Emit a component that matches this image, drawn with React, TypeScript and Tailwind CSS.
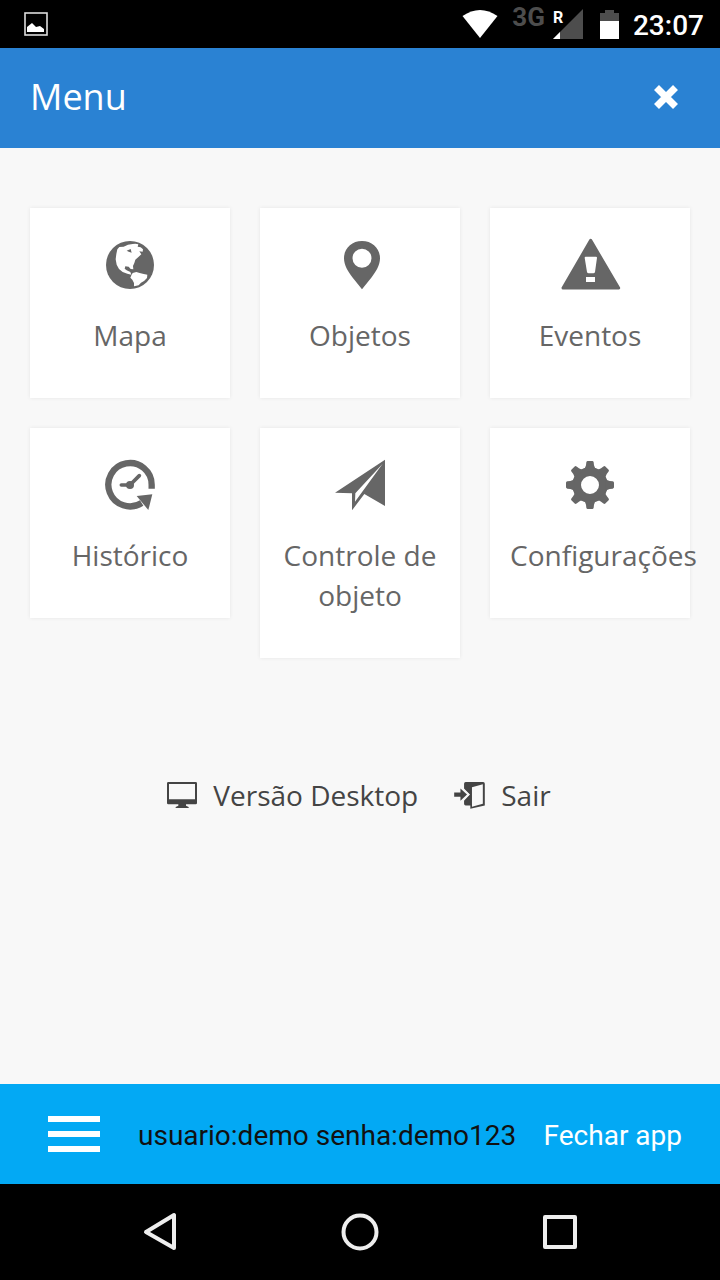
import type { ReactNode } from "react";

const GlobeIcon = () => (
  <>
    <circle cx="120" cy="120" r="72" fill="currentColor" />
    <path
      fill="#fff"
      d="M82 73 88 66 101 65 114 59 128 57 136 56 145 58 143 65 152 67 159 73 158 80 148 79 154 88 146 95 136 104 133 114 129 123 130 133 122 132 116 125 106 124 104 131 110 136 121 141 124 149 112 146 98 141 87 132 80 119 77 103 79 87Z"
    />
    <path fill="currentColor" d="m110 77 12-5 3 11-9-3Z" />
    <path
      fill="#fff"
      d="M124 151 128 144 139 141 149 144 158 146 172 149 171 159 162 168 153 173 146 181 132 184 132 174 127 164 121 158Z"
    />
  </>
);

const PinIcon = () => (
  <path
    fill="currentColor"
    fillRule="evenodd"
    d="M126 48c-31 0-54 22-54 52 0 21 12 39 25 57l29 36 29-36c13-18 25-36 25-57 0-30-23-52-54-52Zm0 23a28.500 28.500 0 1 1 0 57 28.500 28.500 0 0 1 0-57Z"
  />
);

const WarningIcon = () => (
  <>
    <path
      d="M122 46 206 189H39Z"
      fill="currentColor"
      stroke="currentColor"
      strokeWidth="9"
      strokeLinejoin="round"
    />
    <path fill="#fff" d="M104 98q0-3 3-3h31q3 0 3 3l-6 43q-1 4-5 4h-14q-4 0-5-4ZM108 156h27v15h-27Z" />
  </>
);

const HistoryIcon = () => (
  <>
    <path
      d="M185 131v-11a65 65 0 1 0-30 54"
      fill="none"
      stroke="currentColor"
      strokeWidth="19"
    />
    <path fill="currentColor" d="m140 153 47-5-12 47Z" />
    <path d="M94 120h22M123 117l25-25" fill="none" stroke="currentColor" strokeWidth="11" strokeLinecap="round" />
    <circle cx="120" cy="120" r="12" fill="currentColor" />
  </>
);

const PlaneIcon = () => (
  <path
    fill="currentColor"
    fillRule="evenodd"
    d="M195 44v139l-62-36-37 49v-51l-51-2ZM188 56l-82 89-1 25Z"
  />
);

const TEETH = [0, 45, 90, 135, 180, 225, 270, 315];

const GearIcon = () => (
  <>
    <circle cx="120" cy="120" r="40" fill="none" stroke="currentColor" strokeWidth="26" />
    {TEETH.map((angle) => (
      <path
        key={angle}
        fill="currentColor"
        transform={`rotate(${angle} 120 120)`}
        d="M98 74q9-4 10-13l1-9q1-4 4-4h14q3 0 4 4l1 9q1 9 10 13Z"
      />
    ))}
  </>
);

const ITEMS: { label: string; icon: ReactNode }[] = [
  { label: "Mapa", icon: <GlobeIcon /> },
  { label: "Objetos", icon: <PinIcon /> },
  { label: "Eventos", icon: <WarningIcon /> },
  { label: "Histórico", icon: <HistoryIcon /> },
  { label: "Controle de objeto", icon: <PlaneIcon /> },
  { label: "Configurações", icon: <GearIcon /> },
];

function StatusBar() {
  return (
    <div className="flex h-12 items-center bg-black pr-4 pl-6 font-['Roboto',sans-serif] text-white">
      <svg viewBox="0 0 24 24" className="size-6" aria-hidden="true">
        <rect x="1" y="1" width="22" height="22" fill="none" stroke="#ddd" strokeWidth="1.600" />
        <path fill="#fff" d="M3 20v-5l5-4 4 4 4-1 4 3v3Z" />
      </svg>
      <svg viewBox="0 0 35 28" className="ml-auto h-7 w-9" aria-hidden="true">
        <path fill="#fff" d="M0 6Q17.500-6 35 6L17.500 28Z" />
      </svg>
      <span className="ml-[14px] self-start pt-[3px] text-[26px] leading-7 font-bold text-[#4d4d4d]">3G</span>
      <svg viewBox="0 0 32 32" className="ml-[7px] size-8" aria-hidden="true">
        <path fill="#4d4d4d" d="M31 1v30H1Z" />
        <path fill="#fff" d="M8 24v7H1Z" />
        <text x="1" y="15" fill="#fff" fontSize="16" fontWeight="700">
          R
        </text>
      </svg>
      <svg viewBox="0 0 19 29" className="ml-4 h-[29px] w-[19px]" aria-hidden="true">
        <path fill="#4d4d4d" d="M5 0h9v3h5v9H0V3h5Z" />
        <path fill="#fff" d="M0 11h19v18H0Z" />
      </svg>
      <span className="ml-[14px] pt-1 text-[28px] leading-8 font-medium">23:07</span>
    </div>
  );
}

function NavigationBar() {
  return (
    <nav className="grid h-24 grid-cols-3 bg-black px-[60px] text-[#eee]">
      <button type="button" aria-label="Voltar" className="flex items-center justify-center">
        <svg viewBox="0 0 40 40" className="size-10" fill="none" stroke="currentColor" strokeWidth="4" strokeLinejoin="round">
          <path d="M34 3v33L6 20Z" />
        </svg>
      </button>
      <button type="button" aria-label="Início" className="flex items-center justify-center">
        <svg viewBox="0 0 40 40" className="size-10" fill="none" stroke="currentColor" strokeWidth="4">
          <circle cx="20" cy="20" r="16.500" />
        </svg>
      </button>
      <button type="button" aria-label="Recentes" className="flex items-center justify-center">
        <svg viewBox="0 0 40 40" className="size-10" fill="none" stroke="currentColor" strokeWidth="4" strokeLinejoin="round">
          <rect x="5" y="5" width="30" height="30" />
        </svg>
      </button>
    </nav>
  );
}

export default function App() {
  return (
    <div className="flex min-h-screen flex-col bg-[#f8f8f8] font-['Open_Sans',sans-serif]">
      <StatusBar />
      <header className="flex h-[100px] items-center justify-between bg-[#2a82d3] px-[30px] pb-[3px] text-white">
        <h1 className="text-[36px] leading-10">Menu</h1>
        <button type="button" aria-label="Fechar menu" className="flex size-12 items-center justify-center">
          <svg viewBox="0 0 24 24" className="size-6" fill="none" stroke="currentColor" strokeWidth="7">
            <path d="m2.500 2.500 19 19m0-19-19 19" />
          </svg>
        </button>
      </header>

      <main className="flex-1 px-[30px] pt-[60px]">
        <div className="grid grid-cols-3 items-start gap-[30px]">
          {ITEMS.map(({ label, icon }) => (
            <a
              key={label}
              href="#"
              className="flex min-w-0 flex-col bg-white px-5 pt-5 pb-[43px] text-center text-[28px] leading-10 text-[#666] shadow-[0_0_4px_rgba(0,0,0,0.08)]"
            >
              <svg viewBox="0 9 240 240" className="mb-[7px] size-20 self-center" aria-hidden="true">
                {icon}
              </svg>
              <span>{label}</span>
            </a>
          ))}
        </div>

        <div className="flex justify-center gap-9 pt-[117px] pr-[2px] text-[28px] leading-10 text-[#444]">
          <a href="#" className="flex items-center gap-4">
            <svg viewBox="0 0 90 78" className="h-[26px] w-[30px]" aria-hidden="true">
              <path
                fill="currentColor"
                fillRule="evenodd"
                d="M4 0h82q4 0 4 4v59q0 4-4 4H57v4l8 4v3H26v-3l8-4v-4H4q-4 0-4-4V4q0-4 4-4Zm2 6v46h78V6Z"
              />
            </svg>
            <span>Versão Desktop</span>
          </a>
          <a href="#" className="flex items-center gap-4">
            <svg viewBox="0 0 93 82" className="h-[27px] w-[31px]" aria-hidden="true">
              <path fill="currentColor" d="M30 5q0-5 5-5h53q5 0 5 5v66L49 81V71H35q-5 0-5-5V53l17-15-17-15Z" />
              <path fill="#f8f8f8" d="m54 16 33-9v59l-33 9Z" />
              <path fill="currentColor" d="M0 32h19V20l20 18-20 19V45H0Z" />
              <path fill="none" stroke="#f8f8f8" strokeWidth="4" d="m26 19 19 19-19 20" />
            </svg>
            <span>Sair</span>
          </a>
        </div>
      </main>

      <footer className="flex h-[100px] items-center bg-[#03a9f4] pr-[38px] pl-12 font-['Roboto',sans-serif] text-[28px] leading-8">
        <button type="button" aria-label="Abrir menu" className="flex w-[52px] shrink-0 flex-col gap-[9px]">
          <span className="h-[6px] bg-white" />
          <span className="h-[6px] bg-white" />
          <span className="h-[6px] bg-white" />
        </button>
        <p className="ml-[38px] pt-1 whitespace-nowrap text-[#111]">usuario:demo senha:demo123</p>
        <button type="button" className="ml-auto pt-1 whitespace-nowrap text-white">
          Fechar app
        </button>
      </footer>
      <NavigationBar />
    </div>
  );
}
